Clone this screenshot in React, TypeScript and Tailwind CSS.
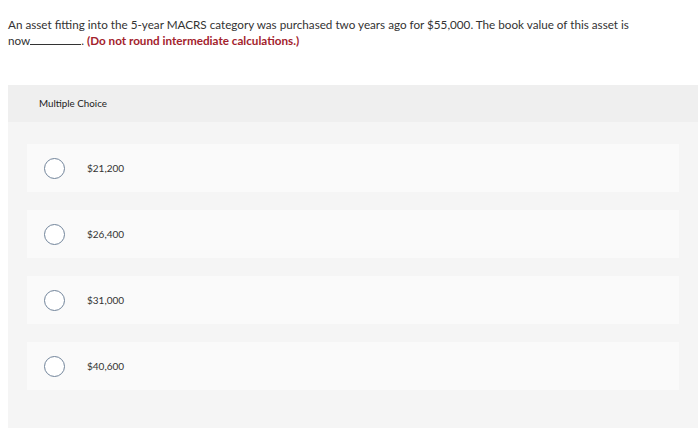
const options = ['$21,200', '$26,400', '$31,000', '$40,600'];

function Radio() {
  return <span className="block w-[21px] h-[21px] rounded-full border border-[#71849a] bg-white shrink-0" />;
}

export default function App() {
  return (
    <div className="w-[700px] h-[428px] bg-white overflow-hidden text-[#333]" style={{ fontFamily: 'Lato, "Open Sans", sans-serif' }}>
      <div className="pl-[8px] pt-[16px] pr-4 text-[11.7px] leading-[16px]">
        <p>
          An asset fitting into the 5-year MACRS category was purchased two years ago for $55,000. The book value of this asset is
          <br />
          now<span className="inline-block w-[51px] border-b border-[#333] align-baseline" />.{' '}
          <span className="font-bold text-[#a3222c]">(Do not round intermediate calculations.)</span>
        </p>
      </div>
      <div className="ml-[8px] mr-[2px] mt-[37px] bg-[#f5f5f5] h-[343px]">
        <div className="h-[37px] bg-[#efefef] pl-[31px] flex items-center text-[9.8px] text-[#222]">Multiple Choice</div>
        <div className="flex flex-col gap-[18px] pt-[22px] pl-[19px] pr-[19px]">
          {options.map((o) => (
            <div key={o} className="h-[48px] bg-[#fafafa] flex items-center pl-[17px]">
              <Radio />
              <span className="ml-[22px] text-[10px] text-[#333]">{o}</span>
            </div>
          ))}
        </div>
      </div>
    </div>
  );
}
